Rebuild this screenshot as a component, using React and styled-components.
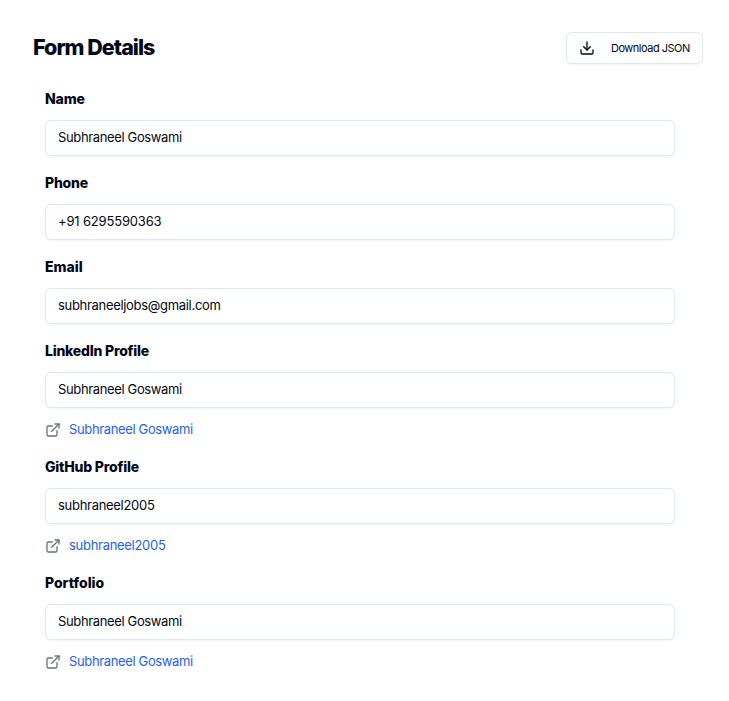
import React from 'react';
import styled, { createGlobalStyle } from 'styled-components';
import { Download, ExternalLink } from 'lucide-react';

const GlobalStyle = createGlobalStyle`
  *, *::before, *::after { box-sizing: border-box; }
  body { margin: 0; background: #fff; color: #020817; font-family: Inter, "Liberation Sans", sans-serif; }
`;

const Page = styled.main`
  min-height: 701px;
  padding: 32px 26px 0 33px;
`;

const Header = styled.header`
  display: flex;
  align-items: center;
  justify-content: space-between;
  height: 32px;
`;

const Title = styled.h1`
  margin: 0;
  padding-bottom: 2px;
  font-size: 21.5px;
  font-weight: 800;
  line-height: 30px;
  letter-spacing: -0.97px;
  white-space: nowrap;
`;

const DownloadButton = styled.button`
  display: flex;
  align-items: center;
  gap: 16px;
  width: 137px;
  height: 32px;
  padding: 0 0 0 12px;
  border: 1px solid #e2e8f0;
  border-radius: 6px;
  background: #fff;
  color: #020817;
  font: 400 11px/16px Inter, sans-serif;
  letter-spacing: -0.5px;
  white-space: nowrap;
  box-shadow: 0 1px 2px rgba(0, 0, 0, 0.05);
`;

const Fields = styled.div`
  display: flex;
  flex-direction: column;
  gap: 16px;
  width: 630px;
  margin: 24px 0 0 12px;
`;

const Field = styled.section`
  display: flex;
  flex-direction: column;
`;

const Label = styled.label`
  height: 24px;
  margin-bottom: 8px;
  font-size: 14px;
  font-weight: 800;
  line-height: 22px;
  letter-spacing: ${({ $tracking }) => $tracking}px;
`;

const Input = styled.input`
  width: 100%;
  height: 36px;
  padding: 0 12px 2px;
  border: 1px solid #e2e8f0;
  border-radius: 6px;
  outline: none;
  background: #fff;
  color: #020817;
  font: 400 13px/20px Inter, sans-serif;
  letter-spacing: ${({ $tracking }) => $tracking}px;
  box-shadow: 0 1px 2px rgba(0, 0, 0, 0.05);
`;

const LinkRow = styled.div`
  display: flex;
  align-items: center;
  gap: 8px;
  height: 20px;
  margin-top: 12px;
  color: #6b7280;
`;

const ProfileLink = styled.a`
  color: #2563eb;
  font-size: 13px;
  line-height: 18px;
  letter-spacing: ${({ $tracking }) => $tracking}px;
  padding-bottom: 2px;
  text-decoration: none;
`;

const fields = [
  { label: 'Name', value: 'Subhraneel Goswami', labelTracking: -0.15, tracking: -0.36 },
  { label: 'Phone', value: '+91 6295590363', labelTracking: -0.2, tracking: -0.17 },
  { label: 'Email', value: 'subhraneeljobs@gmail.com', labelTracking: 0, tracking: -0.31 },
  { label: 'LinkedIn Profile', value: 'Subhraneel Goswami', labelTracking: -0.23, tracking: -0.36, link: true },
  { label: 'GitHub Profile', value: 'subhraneel2005', labelTracking: -0.2, tracking: -0.29, link: true },
  { label: 'Portfolio', value: 'Subhraneel Goswami', labelTracking: -0.03, tracking: -0.36, link: true },
];

export default function App() {
  return (
    <>
      <GlobalStyle />
      <Page>
        <Header>
          <Title>Form Details</Title>
          <DownloadButton type="button"><Download size={16} />Download JSON</DownloadButton>
        </Header>
        <Fields>
          {fields.map(({ label, value, labelTracking, tracking, link }) => (
            <Field key={label}>
              <Label htmlFor={label} $tracking={labelTracking}>{label}</Label>
              <Input id={label} value={value} readOnly $tracking={tracking} />
              {link && (
                <LinkRow>
                  <ExternalLink size={16} />
                  <ProfileLink href="#" $tracking={tracking}>{value}</ProfileLink>
                </LinkRow>
              )}
            </Field>
          ))}
        </Fields>
      </Page>
    </>
  );
}
